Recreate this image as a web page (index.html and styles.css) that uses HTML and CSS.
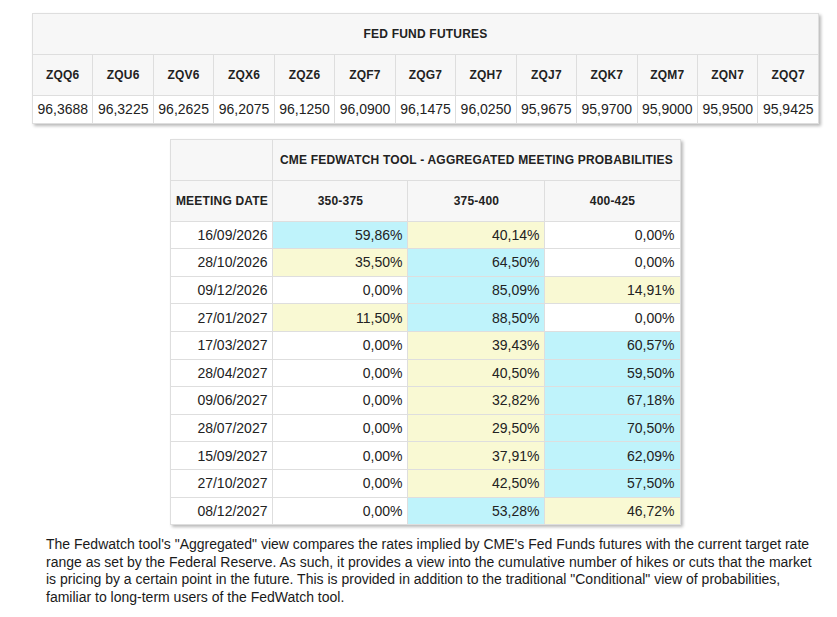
FILE: index.html
```html
<!DOCTYPE html>
<html>
<head>
<meta charset="utf-8">
<link rel="stylesheet" href="styles.css">
</head>
<body>
<div class="page">
  <table class="futures">
    <thead>
      <tr class="title-row"><th colspan="13">FED FUND FUTURES</th></tr>
      <tr class="head-row">
        <th>ZQQ6</th><th>ZQU6</th><th>ZQV6</th><th>ZQX6</th><th>ZQZ6</th><th>ZQF7</th><th>ZQG7</th><th>ZQH7</th><th>ZQJ7</th><th>ZQK7</th><th>ZQM7</th><th>ZQN7</th><th>ZQQ7</th>
      </tr>
    </thead>
    <tbody>
      <tr class="data-row">
        <td>96,3688</td><td>96,3225</td><td>96,2625</td><td>96,2075</td><td>96,1250</td><td>96,0900</td><td>96,1475</td><td>96,0250</td><td>95,9675</td><td>95,9700</td><td>95,9000</td><td>95,9500</td><td>95,9425</td>
      </tr>
    </tbody>
  </table>

  <table class="probs">
    <colgroup>
      <col class="c-date"><col class="c-a"><col class="c-b"><col class="c-c">
    </colgroup>
    <thead>
      <tr class="title-row"><th></th><th colspan="3">CME FEDWATCH TOOL - AGGREGATED MEETING PROBABILITIES</th></tr>
      <tr class="head-row"><th>MEETING DATE</th><th>350-375</th><th>375-400</th><th>400-425</th></tr>
    </thead>
    <tbody>
      <tr><td>16/09/2026</td><td class="cy">59,86%</td><td class="ye">40,14%</td><td>0,00%</td></tr>
      <tr><td>28/10/2026</td><td class="ye">35,50%</td><td class="cy">64,50%</td><td>0,00%</td></tr>
      <tr><td>09/12/2026</td><td>0,00%</td><td class="cy">85,09%</td><td class="ye">14,91%</td></tr>
      <tr><td>27/01/2027</td><td class="ye">11,50%</td><td class="cy">88,50%</td><td>0,00%</td></tr>
      <tr><td>17/03/2027</td><td>0,00%</td><td class="ye">39,43%</td><td class="cy">60,57%</td></tr>
      <tr><td>28/04/2027</td><td>0,00%</td><td class="ye">40,50%</td><td class="cy">59,50%</td></tr>
      <tr><td>09/06/2027</td><td>0,00%</td><td class="ye">32,82%</td><td class="cy">67,18%</td></tr>
      <tr><td>28/07/2027</td><td>0,00%</td><td class="ye">29,50%</td><td class="cy">70,50%</td></tr>
      <tr><td>15/09/2027</td><td>0,00%</td><td class="ye">37,91%</td><td class="cy">62,09%</td></tr>
      <tr><td>27/10/2027</td><td>0,00%</td><td class="ye">42,50%</td><td class="cy">57,50%</td></tr>
      <tr><td>08/12/2027</td><td>0,00%</td><td class="cy">53,28%</td><td class="ye">46,72%</td></tr>
    </tbody>
  </table>

  <p class="note">The Fedwatch tool's "Aggregated" view compares the rates implied by CME's Fed Funds futures with the current target rate range as set by the Federal Reserve. As such, it provides a view into the cumulative number of hikes or cuts that the market is pricing by a certain point in the future. This is provided in addition to the traditional "Conditional" view of probabilities, familiar to long-term users of the FedWatch tool.</p>
</div>
</body>
</html>
```

FILE: styles.css
```css
html, body {
  margin: 0;
  padding: 0;
  background: #ffffff;
}

body {
  font-family: "Liberation Sans", Arial, sans-serif;
  color: #222222;
}

.page {
  padding: 13px 0 0 32px;
  width: 787px;
}

table {
  border-collapse: collapse;
  box-shadow: 2px 2px 3px rgba(0, 0, 0, 0.28);
}

th, td {
  border: 1px solid #dedede;
  padding: 0 5px;
  white-space: nowrap;
}

th {
  background: #f7f7f7;
  font-weight: bold;
  font-size: 12px;
  letter-spacing: 0.2px;
  color: #222222;
  text-align: center;
  padding: 0 2px;
}

.title-row th {
  height: 40px;
}

.head-row th {
  height: 40px;
}

td {
  font-size: 14px;
  height: 26.6px;
  text-align: right;
  background: #ffffff;
}

.futures {
  width: 787px;
  table-layout: fixed;
}

.futures td {
  padding: 0 2px;
  text-align: center;
}

.probs {
  margin: 15px auto 0;
  width: 509px;
  table-layout: fixed;
}

.c-date { width: 102px; }
.c-a { width: 135px; }
.c-b { width: 137px; }
.c-c { width: 135px; }

.probs td.cy { background: #bff3fb; }
.probs td.ye { background: #f9f9d3; }

.note {
  margin: 11px 0 0 14px;
  width: 772px;
  font-size: 14px;
  line-height: 17.5px;
  color: #1a1a1a;
}
```
